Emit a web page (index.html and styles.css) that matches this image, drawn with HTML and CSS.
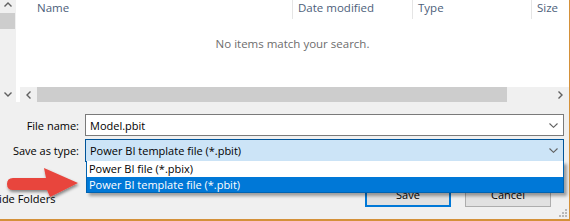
FILE: index.html
```html
<!DOCTYPE html>
<html>
<head>
<meta charset="utf-8">
<link rel="stylesheet" href="styles.css">
</head>
<body>
<div class="window">
  <div class="browser">
    <div class="vscroll">
      <div class="varrow up"><svg width="8" height="5" viewBox="0 0 8 5"><path d="M0.5 4.5 L4 1 L7.5 4.5" fill="none" stroke="#606060" stroke-width="1.4"/></svg></div>
      <div class="vthumb"></div>
      <div class="vspace"></div>
      <div class="varrow down"><svg width="8" height="5" viewBox="0 0 8 5"><path d="M0.5 0.5 L4 4 L7.5 0.5" fill="none" stroke="#606060" stroke-width="1.4"/></svg></div>
    </div>
    <div class="list">
      <div class="header">
        <div class="col name">Name</div>
        <div class="col date">Date modified</div>
        <div class="col type">Type</div>
        <div class="col size">Size</div>
      </div>
      <div class="empty">No items match your search.</div>
      <div class="hscroll">
        <div class="harrow"><svg width="5" height="8" viewBox="0 0 5 8"><path d="M4.5 0.5 L1 4 L4.5 7.5" fill="none" stroke="#606060" stroke-width="1.4"/></svg></div>
        <div class="hthumb"></div>
        <div class="hspace"></div>
        <div class="harrow"><svg width="5" height="8" viewBox="0 0 5 8"><path d="M0.5 0.5 L4 4 L0.5 7.5" fill="none" stroke="#606060" stroke-width="1.4"/></svg></div>
      </div>
    </div>
  </div>

  <div class="form">
    <label class="label">File name:</label>
    <div class="field input">
      <span class="value">Model.pbit</span>
      <svg class="chev" width="9" height="5" viewBox="0 0 9 5"><path d="M0.5 0.5 L4.5 4.3 L8.5 0.5" fill="none" stroke="#606060" stroke-width="1.1"/></svg>
    </div>
    <label class="label">Save as type:</label>
    <div class="field combo">
      <span class="value">Power BI template file (*.pbit)</span>
      <svg class="chev" width="9" height="5" viewBox="0 0 9 5"><path d="M0.5 0.5 L4.5 4.3 L8.5 0.5" fill="none" stroke="#606060" stroke-width="1.1"/></svg>
      <div class="dropdown">
        <div class="opt">Power BI file (*.pbix)</div>
        <div class="opt sel">Power BI template file (*.pbit)</div>
      </div>
    </div>
  </div>

  <div class="footer">
    <div class="hide">Hide Folders</div>
    <div class="buttons">
      <div class="btn default">Save</div>
      <div class="btn">Cancel</div>
    </div>
  </div>

  <svg class="arrow" width="90" height="45" viewBox="0 0 90 45">
    <defs>
      <filter id="sh" x="-20%" y="-20%" width="140%" height="160%">
        <feDropShadow dx="1" dy="2" stdDeviation="1.5" flood-color="#000" flood-opacity="0.45"/>
      </filter>
    </defs>
    <path d="M12 12 L45 12 L43 2 L77 17 L49 31 L46 24 L12 24 Q6 24 6 18 Q6 12 12 12 Z" fill="#e8453c" filter="url(#sh)"/>
  </svg>

  <svg class="grip" width="8" height="8" viewBox="0 0 8 8">
    <rect x="6" y="0" width="2" height="2" fill="#b8b8b8"/>
    <rect x="3" y="3" width="2" height="2" fill="#b8b8b8"/>
    <rect x="6" y="3" width="2" height="2" fill="#b8b8b8"/>
    <rect x="0" y="6" width="2" height="2" fill="#b8b8b8"/>
    <rect x="3" y="6" width="2" height="2" fill="#b8b8b8"/>
    <rect x="6" y="6" width="2" height="2" fill="#b8b8b8"/>
  </svg>
</div>
</body>
</html>
```

FILE: styles.css
```css
html, body {
  margin: 0;
  padding: 0;
}
body {
  width: 570px;
  height: 221px;
  overflow: hidden;
  background: #f0f0f0;
  font-family: "Open Sans", "Noto Sans", sans-serif;
  font-size: 11px;
  color: #000;
}
.window {
  position: relative;
  box-sizing: border-box;
  width: 570px;
  height: 221px;
  border-right: 1px solid #d4913a;
  border-bottom: 2px solid #d4913a;
  display: flex;
  flex-direction: column;
}
.browser {
  display: flex;
  height: 102px;
}
.vscroll {
  width: 16px;
  display: flex;
  flex-direction: column;
  background: #f0f0f0;
}
.varrow {
  display: flex;
  justify-content: center;
  width: 15px;
}
.varrow.up {
  height: 13px;
  align-items: flex-start;
  padding-top: 2px;
  box-sizing: border-box;
}
.varrow.down {
  height: 15px;
  align-items: center;
}
.vthumb {
  width: 15px;
  height: 16px;
  background: #cdcdcd;
}
.vspace { flex: 1; }
.list {
  flex: 1;
  background: #fff;
  display: flex;
  flex-direction: column;
}
.header {
  display: flex;
  height: 19px;
  color: #4c607a;
  font-size: 11.5px;
  line-height: 15px;
}
.col {
  box-sizing: border-box;
  padding-left: 5px;
  border-left: 1px solid #e5e5e5;
}
.col.name {
  width: 276px;
  padding-left: 21px;
  border-left: none;
}
.col.date { width: 120px; }
.col.type { width: 119px; }
.col.size { flex: 1; }
.empty {
  flex: 1;
  display: flex;
  justify-content: center;
  align-items: center;
  padding-bottom: 20px;
  color: #6d6d6d;
  font-size: 11.5px;
}
.hscroll {
  display: flex;
  height: 15px;
  margin-left: 4px;
  background: #f0f0f0;
}
.harrow {
  width: 17px;
  display: flex;
  align-items: center;
  justify-content: center;
}
.hthumb {
  width: 470px;
  background: #cdcdcd;
}
.hspace { flex: 1; }

.form {
  display: grid;
  grid-template-columns: 85px 479px;
  grid-template-rows: 22px 23px;
  row-gap: 3px;
  margin-top: 12px;
}
.label {
  text-align: right;
  padding-right: 6px;
  align-self: center;
  line-height: 15px;
}
.field {
  position: relative;
  box-sizing: border-box;
  display: flex;
  align-items: center;
  padding-left: 4px;
  padding-right: 5px;
}
.field .value { flex: 1; line-height: 15px; }
.input {
  background: #fff;
  border: 1px solid #7a7a7a;
}
.combo {
  background: #cce4f7;
  border: 1px solid #005499;
}
.chev { flex: none; }
.dropdown {
  position: absolute;
  top: 100%;
  left: 0;
  width: 478px;
  box-sizing: border-box;
  background: #fff;
  border: 1px solid #0063b1;
  border-top: none;
  box-shadow: 3px 3px 3px rgba(0, 0, 0, 0.35);
  z-index: 2;
}
.opt {
  height: 16px;
  line-height: 16px;
  padding-left: 2px;
}
.opt.sel {
  height: 15px;
  line-height: 15px;
  background: #0078d7;
  color: #fff;
}

.footer {
  display: flex;
  justify-content: space-between;
  margin-top: 22px;
  padding-right: 18px;
}
.hide {
  margin-left: -9px;
  margin-top: 7px;
  line-height: 15px;
}
.buttons {
  display: flex;
  gap: 14px;
}
.btn {
  box-sizing: border-box;
  width: 86px;
  height: 23px;
  background: #e1e1e1;
  border: 1px solid #adadad;
  display: flex;
  align-items: center;
  justify-content: center;
  padding-bottom: 2px;
}
.btn.default {
  border: 2px solid #0078d7;
}
.arrow {
  position: absolute;
  left: 1px;
  top: 166px;
  z-index: 3;
}
.grip {
  position: absolute;
  right: 2px;
  bottom: 2px;
}
```
